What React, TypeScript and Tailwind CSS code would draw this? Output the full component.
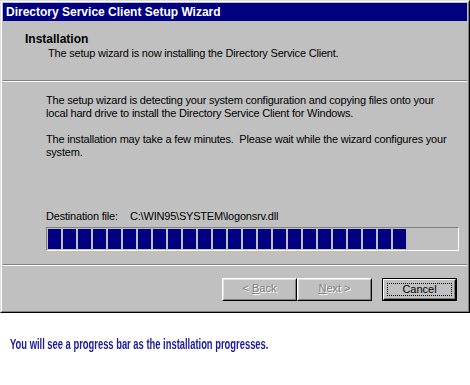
export default function App() {
  const blocks = Array.from({ length: 24 });

  return (
    <div className="w-[470px] h-[385px] bg-white" style={{ fontFamily: '"Liberation Sans", Arial, sans-serif' }}>
      {/* ───── Window ───── */}
      <div className="w-[470px] h-[313px] border border-t-[#dfdfdf] border-l-[#dfdfdf] border-r-black border-b-black bg-[#c0c0c0]">
        <div className="h-full border border-t-white border-l-white border-r-[#808080] border-b-[#808080] p-px flex flex-col">
          <div className="h-[18px] bg-[#000080] text-white font-bold text-[12px] leading-[18px] pl-[3px]">
            Directory Service Client Setup Wizard
          </div>

          <div className="h-[59px] pt-[11px] pl-[22px] text-[11px] text-black whitespace-nowrap">
            <div className="font-bold text-[12px] leading-[14px]">Installation</div>
            <div className="pl-[23px] leading-[14px] tracking-[-0.2px]">
              The setup wizard is now installing the Directory Service Client.
            </div>
          </div>

          <div className="border-t border-t-[#808080] border-b border-b-white" />

          <div className="flex-1 pl-[43px] pr-[8px] pt-[12px] text-[11px] leading-[13px] text-black whitespace-nowrap tracking-[-0.2px]">
            <p>
              The setup wizard is detecting your system configuration and copying files onto your
              <br />
              local hard drive to install the Directory Service Client for Windows.
            </p>
            <p className="mt-[13px]">
              The installation may take a few minutes.&nbsp; Please wait while the wizard configures your
              <br />
              system.
            </p>

            <div className="mt-[51px] flex">
              <span className="w-[84px]">Destination file:</span>
              <span>C:\WIN95\SYSTEM\logonsrv.dll</span>
            </div>

            <div className="mt-[4px] w-[413px] h-[24px] border border-t-[#808080] border-l-[#808080] border-r-white border-b-white p-px flex gap-[2px]">
              {blocks.map((_, i) => (
                <div key={i} className="w-[13px] h-full bg-[#000080]" />
              ))}
            </div>
          </div>

          <div className="border-t border-t-[#808080] border-b border-b-white" />

          <div className="h-[44px] flex items-start justify-end pt-[12px] pr-[10px] text-[11px]">
            <button className="w-[75px] h-[23px] border border-t-white border-l-white border-r-black border-b-black">
              <div className="h-full border border-t-[#dfdfdf] border-l-[#dfdfdf] border-r-[#808080] border-b-[#808080] text-[#808080] [text-shadow:1px_1px_0_white]">
                &lt; <u>B</u>ack
              </div>
            </button>
            <button className="w-[75px] h-[23px] border border-t-white border-l-white border-r-black border-b-black">
              <div className="h-full border border-t-[#dfdfdf] border-l-[#dfdfdf] border-r-[#808080] border-b-[#808080] text-[#808080] [text-shadow:1px_1px_0_white]">
                <u>N</u>ext &gt;
              </div>
            </button>
            <button className="ml-[10px] w-[75px] h-[23px] border border-black">
              <div className="h-full border border-t-white border-l-white border-r-black border-b-black">
                <div className="h-full border border-r-[#808080] border-b-[#808080] border-t-transparent border-l-transparent p-[2px]">
                  <div className="h-full border border-dotted border-black flex items-center justify-center text-black">
                    Cancel
                  </div>
                </div>
              </div>
            </button>
          </div>
        </div>
      </div>

      <div className="pt-[19px] pl-[10px]">
        <span className="inline-block origin-left scale-x-[0.67] text-[14px] font-bold text-[#1a1a9c] whitespace-nowrap" style={{ fontFamily: '"Liberation Sans Narrow", "Liberation Sans", sans-serif' }}>
          You will see a progress bar as the installation progresses.
        </span>
      </div>
    </div>
  );
}
